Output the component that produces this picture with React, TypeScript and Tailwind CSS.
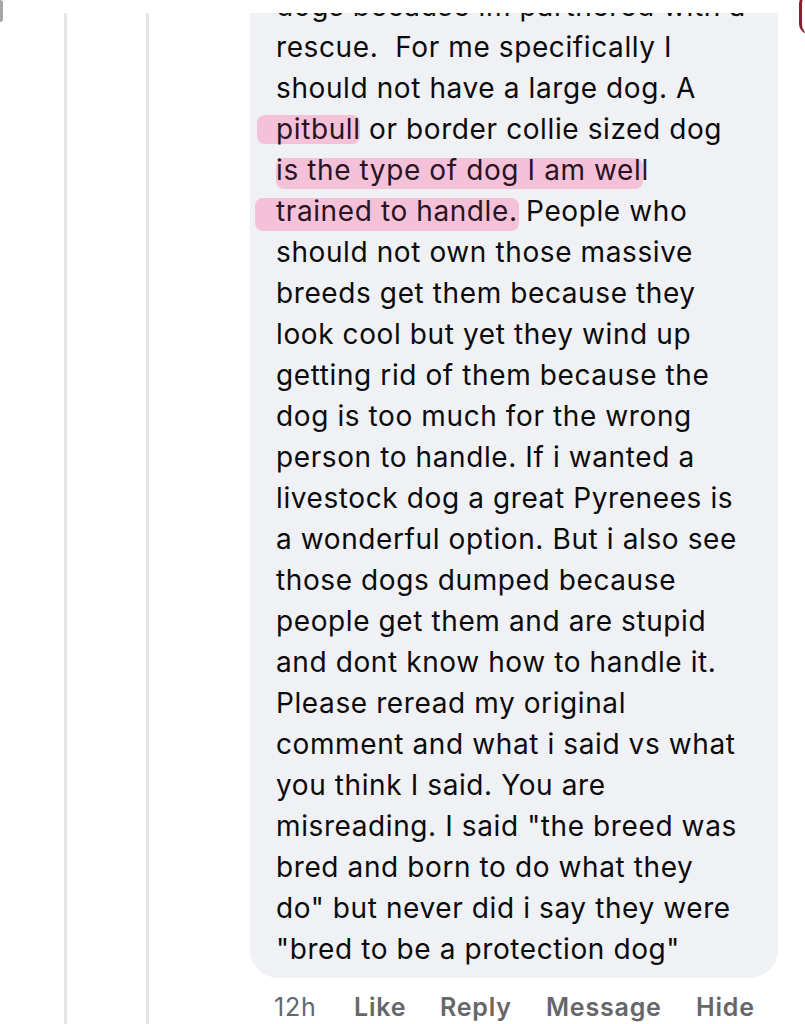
import React from 'react';

type Piece = { text: string; mark?: { left: number; right: number; top: number; bottom: number } };

const lines: Piece[][] = [
  [{ text: 'dogs because im partnered with a' }],
  [{ text: 'rescue.\u00a0 For me specifically I' }],
  [{ text: 'should not have a large dog. A' }],
  [{ text: 'pitbull', mark: { left: -19, right: 1, top: 6, bottom: 6 } }, { text: ' or border collie sized dog' }],
  [{ text: 'is the type of dog I am well', mark: { left: 0, right: 6, top: 8, bottom: 2 } }],
  [{ text: 'trained to handle.', mark: { left: -21, right: -1, top: 7, bottom: 1 } }, { text: ' People who' }],
  [{ text: 'should not own those massive' }],
  [{ text: 'breeds get them because they' }],
  [{ text: 'look cool but yet they wind up' }],
  [{ text: 'getting rid of them because the' }],
  [{ text: 'dog is too much for the wrong' }],
  [{ text: 'person to handle. If i wanted a' }],
  [{ text: 'livestock dog a great Pyrenees is' }],
  [{ text: 'a wonderful option. But i also see' }],
  [{ text: 'those dogs dumped because' }],
  [{ text: 'people get them and are stupid' }],
  [{ text: 'and dont know how to handle it.' }],
  [{ text: 'Please reread my original' }],
  [{ text: 'comment and what i said vs what' }],
  [{ text: 'you think I said. You are' }],
  [{ text: 'misreading. I said "the breed was' }],
  [{ text: 'bred and born to do what they' }],
  [{ text: 'do" but never did i say they were' }],
  [{ text: '"bred to be a protection dog"' }],
];

const App = () => {
  return (
    <div
      className="relative h-[1024px] w-[805px] overflow-hidden bg-white"
      style={{ fontFamily: 'Inter, "Noto Sans", "Liberation Sans", sans-serif' }}
    >
      {/* thread area, clipped under the top white strip */}
      <div className="mt-[13px] flex h-[1011px] overflow-hidden">
        <div className="w-[64px] shrink-0" />
        <div className="w-[3px] shrink-0 bg-[#e4e5e9]" />
        <div className="w-[79px] shrink-0" />
        <div className="w-[3px] shrink-0 bg-[#e4e5e9]" />
        <div className="w-[101px] shrink-0" />

        <div className="w-[528px] shrink-0">
          <div className="-mt-[40px] rounded-[28px] bg-[#f0f1f5] pb-[8px] pl-[26px] pr-[8px] pt-[13px] text-[28px] tracking-[0.6px] text-[#0b0b0c]">
            {lines.map((line, i) => (
              <div key={i} className="h-[41px] whitespace-pre leading-[41px]">
                {line.map((p, j) =>
                  p.mark ? (
                    <span key={j} className="relative isolate inline-block h-[41px] align-top text-[#2a1422]">
                      <span
                        className="absolute -z-10 rounded-[8px] bg-[#f5c1d8]"
                        style={{ left: p.mark.left, right: p.mark.right, top: p.mark.top, bottom: p.mark.bottom }}
                      />
                      {p.text}
                    </span>
                  ) : (
                    <span key={j}>{p.text}</span>
                  )
                )}
              </div>
            ))}
          </div>

          <div className="flex pl-[24px] pt-[14px] text-[25px] leading-[30px] tracking-[0.8px] text-[#65676b]">
            <span className="w-[80px] shrink-0">12h</span>
            <span className="w-[86px] shrink-0 font-semibold">Like</span>
            <span className="w-[106px] shrink-0 font-semibold">Reply</span>
            <span className="w-[150px] shrink-0 font-semibold">Message</span>
            <span className="font-semibold">Hide</span>
          </div>
        </div>
      </div>

      {/* screen corners */}
      <div className="absolute -right-[14px] -top-[6px] h-[40px] w-[20px] rounded-full border-l-[3px] border-[#8a1f2e]" />
      <div className="absolute -left-[3px] top-0 h-[22px] w-[6px] rounded-full bg-[#6b6b6b] opacity-60" />
    </div>
  );
};

export default App;
